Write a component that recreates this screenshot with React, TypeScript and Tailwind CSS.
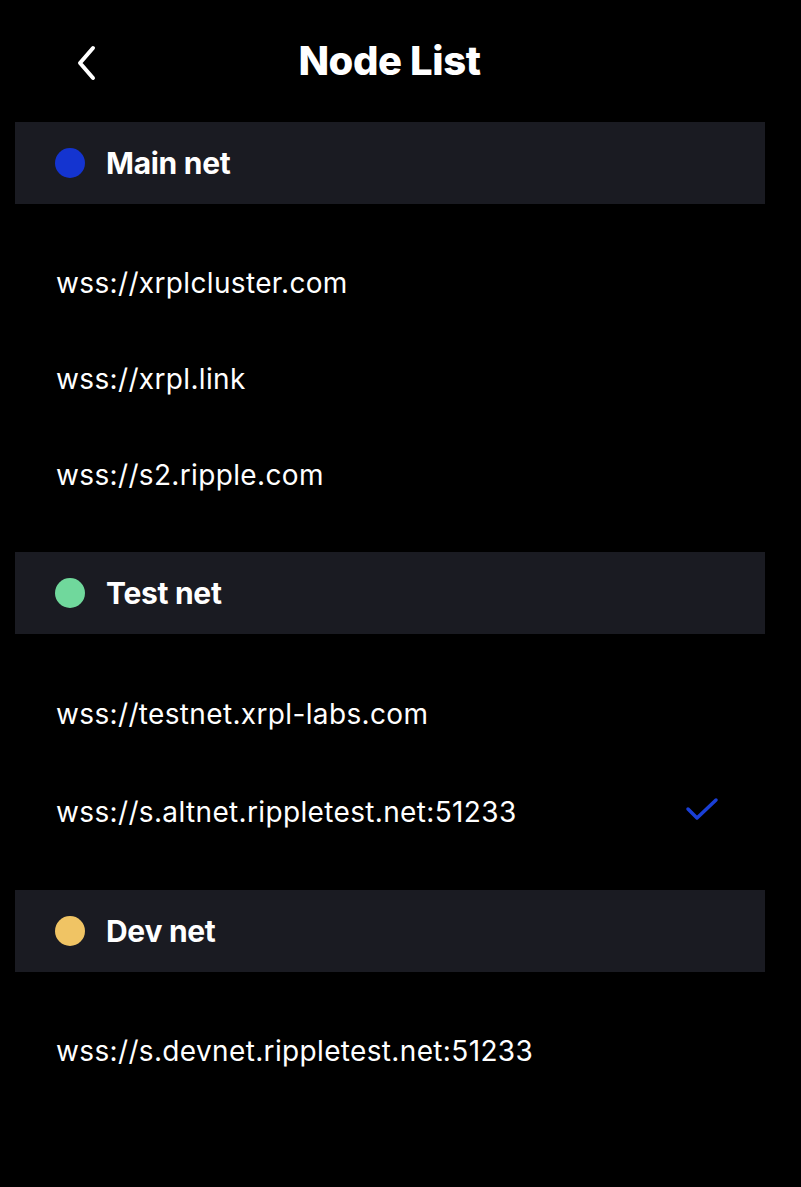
import React from "react";

type Node = { url: string; selected?: boolean };
type Network = { name: string; dot: string; rowH: string; nodes: Node[] };

const networks: Network[] = [
  {
    name: "Main net",
    dot: "bg-[#1434d0]",
    rowH: "h-[96px]",
    nodes: [
      { url: "wss://xrplcluster.com" },
      { url: "wss://xrpl.link" },
      { url: "wss://s2.ripple.com" },
    ],
  },
  {
    name: "Test net",
    dot: "bg-[#70d89c]",
    rowH: "h-[98px]",
    nodes: [
      { url: "wss://testnet.xrpl-labs.com" },
      { url: "wss://s.altnet.rippletest.net:51233", selected: true },
    ],
  },
  {
    name: "Dev net",
    dot: "bg-[#f0c464]",
    rowH: "h-[96px]",
    nodes: [{ url: "wss://s.devnet.rippletest.net:51233" }],
  },
];

const App: React.FC = () => {
  return (
    <div className="min-h-[1187px] w-full bg-black text-white font-['Inter',sans-serif]">
      {/* header */}
      <div className="relative flex h-[122px] items-start justify-center pt-[35px]">
        <button className="absolute left-[70px] top-[39px] p-1">
          <svg width="26" height="38" viewBox="0 0 26 38" fill="none">
            <path
              d="M19 5 L6 20 L19 35"
              stroke="white"
              strokeWidth="4"
              strokeLinecap="round"
              strokeLinejoin="round"
            />
          </svg>
        </button>
        <h1 className="text-[40px] font-extrabold leading-[52px] tracking-[-0.4px] -ml-[22px]">
          Node List
        </h1>
      </div>

      {networks.map((net) => (
        <div key={net.name}>
          <div className="mx-[15px] flex h-[82px] w-[750px] items-center gap-[21px] bg-[#1a1b22] pl-[40px]">
            <span className={`h-[30px] w-[30px] rounded-full ${net.dot}`} />
            <span className="text-[30px] font-bold tracking-[-0.3px]">{net.name}</span>
          </div>
          <div className="py-[30px]">
            {net.nodes.map((n) => (
              <div
                key={n.url}
                className={`flex ${net.rowH} items-center justify-between pl-[56px] pr-[80px]`}
              >
                <span className="text-[28px] font-normal tracking-[0.35px] translate-y-[1px]">
                  {n.url}
                </span>
                {n.selected && (
                  <svg width="36" height="28" viewBox="0 0 36 28" fill="none">
                    <path
                      d="M3 12 L12 21 L31 3"
                      stroke="#1a3fd6"
                      strokeWidth="3.5"
                      strokeLinecap="round"
                      strokeLinejoin="round"
                    />
                  </svg>
                )}
              </div>
            ))}
          </div>
        </div>
      ))}
    </div>
  );
};

export default App;
